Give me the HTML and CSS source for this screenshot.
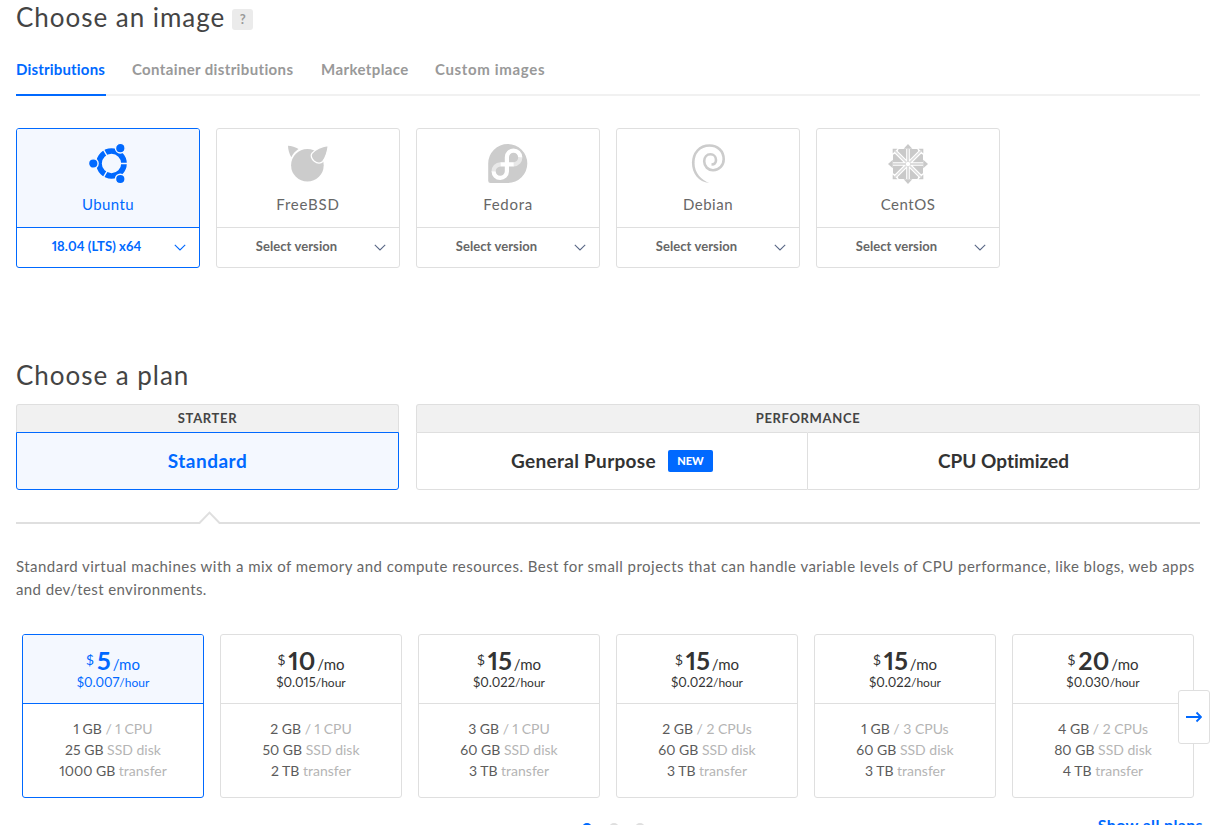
FILE: index.html
```html
<!DOCTYPE html>
<html lang="en">
<head>
<meta charset="utf-8">
<title>Create Droplet</title>
<link rel="stylesheet" href="styles.css">
</head>
<body>
<svg class="defs" width="0" height="0"><symbol id="chevron" viewBox="0 0 12 7"><path d="M.8.8 6 6 11.2.8" fill="none" stroke="currentColor" stroke-width="1.1"/></symbol></svg>
<main class="page">
  <h1 class="title">Choose an image <span class="help">?</span></h1>
  <nav class="tabs">
    <a class="tab tab-active t1">Distributions</a><a class="tab t2">Container distributions</a><a class="tab t3">Marketplace</a><a class="tab t4">Custom images</a>
  </nav>
  <section class="images">
    <article class="image selected">
      <div class="image-top">
        <svg class="logo" viewBox="0 0 40 40"><circle cx="23.5" cy="19.5" r="12.5" fill="none" stroke="#0069ff" stroke-width="5.6"/><g stroke="#f4f8ff" stroke-width="1.4"><path d="M23.5 19.5H40M23.5 19.5 15 4.8M23.5 19.5 15 34.2"/><g fill="#0069ff"><circle cx="5.3" cy="19.5" r="4.8"/><circle cx="32.3" cy="4.2" r="4.8"/><circle cx="32.3" cy="35" r="4.8"/></g></g></svg>
        <span class="name n1">Ubuntu</span>
      </div>
      <div class="version"><span class="v1">18.04 (LTS) x64</span><svg class="chev"><use href="#chevron"/></svg></div>
    </article>
    <article class="image">
      <div class="image-top">
        <svg class="logo" viewBox="0 0 40 40" fill="#ccc"><path d="M0 1.8C3.4 2 7.6 3 10.5 5 7.4 7 5 9.8 3.3 13.3 1.2 9.8 0 5.4 0 1.8Z"/><circle cx="19.4" cy="21.2" r="16.3"/><path d="M40.3 1.5C39.6 7.6 37.5 13.7 34.8 17.5 33 19.6 29.3 19.7 26.3 17.3 23.6 15 22.2 11.5 23.9 9.3 26.4 6 34.6 1.7 40.3 1.5Z" stroke="#fff" stroke-width="1.3"/></svg>
        <span class="name n2">FreeBSD</span>
      </div>
      <div class="version"><span>Select version</span><svg class="chev"><use href="#chevron"/></svg></div>
    </article>
    <article class="image">
      <div class="image-top">
        <svg class="logo" viewBox="0 0 40 40" fill="none" stroke-width="4.2"><path d="M19.8 0A19.5 19.5 0 0 1 19.8 39H2.5Q.2 39 .2 36.7V19.5A19.6 19.5 0 0 1 19.8 0Z" fill="#ccc"/><path d="M32.2 13A6.6 6.6 0 0 1 25.6 20.3M12.4 20.3A6.9 6.9 0 0 0 5.6 27.4" stroke="#e8e8e8"/><path d="M5.6 27.2A6.6 6.6 0 0 0 18.9 27.4V13.3A6.6 6.6 0 0 1 32.2 13.3M12.4 20.3H25.8" stroke="#fff"/></svg>
        <span class="name n3">Fedora</span>
      </div>
      <div class="version"><span>Select version</span><svg class="chev"><use href="#chevron"/></svg></div>
    </article>
    <article class="image">
      <div class="image-top">
        <svg class="logo" viewBox="0 0 40 40"><path d="M23.5 20.5C26 20.4 28 18.7 28 15.9 28 12.5 25.5 10.3 22.5 10.3 18.7 10.3 16.2 13.4 16.2 17.3 16.2 22.5 20.2 26.3 25.1 26.2 31.5 26 35.7 21.2 35.7 15.3 35.7 6.8 29.5 1.5 21.5 1.5 11.5 1.5 5.2 9 5.2 19" fill="none" stroke="#ccc" stroke-width="2.6"/><path d="M3.9 18.5C3.9 29.5 10.5 38 21.3 39 13.5 35.7 6.5 29.6 6.5 18.5Z" fill="#ccc"/></svg>
        <span class="name n4">Debian</span>
      </div>
      <div class="version"><span>Select version</span><svg class="chev"><use href="#chevron"/></svg></div>
    </article>
    <article class="image">
      <div class="image-top">
        <svg class="logo" viewBox="0 0 40 40"><defs><g id="wedge"><path d="M20 0 24.3 4.8H15.7Z"/><path d="M21.8 5H29.3L30.3 6.9 21.8 15.4ZM18.2 5H10.7L9.7 6.9 18.2 15.4Z"/><path d="M30.5 4.7H35.3V9.5Z"/><path d="M21.5 18.5 33.5 6.5" stroke="#dcdcdc" stroke-width="1.7"/><path d="M20 5V18" stroke="#dcdcdc" stroke-width="2"/></g></defs><g fill="#c9c9c9"><use href="#wedge"/><use href="#wedge" transform="rotate(90 20 20)"/><use href="#wedge" transform="rotate(180 20 20)"/><use href="#wedge" transform="rotate(270 20 20)"/></g></svg>
        <span class="name n5">CentOS</span>
      </div>
      <div class="version"><span>Select version</span><svg class="chev"><use href="#chevron"/></svg></div>
    </article>
  </section>

  <h2 class="title title-plan">Choose a plan</h2>
  <section class="groups">
    <div class="group starter">
      <div class="group-head">STARTER</div>
      <div class="options"><div class="option option-on">Standard</div></div>
    </div>
    <div class="group performance">
      <div class="group-head">PERFORMANCE</div>
      <div class="options"><div class="option"><span class="gp">General Purpose</span><span class="new">NEW</span></div><div class="option"><span class="cpu">CPU Optimized</span></div></div>
    </div>
  </section>
  <svg class="divider" viewBox="0 0 1184 14"><path d="M0 12H183.5L193.5 1.6 203.5 12H1184" fill="none" stroke="#dfdfdf" stroke-width="2"/></svg>
  <p class="blurb"><span class="b1">Standard virtual machines with a mix of memory and compute resources. Best for small projects that can handle variable levels of CPU performance, like blogs, web apps</span><br><span class="b2">and dev/test environments.</span></p>
  <section class="plans">
    <article class="plan selected"><div class="price"><div class="month"><sup>$</sup><b>5</b><span>/mo</span></div><div class="hour">$0.007<small>/hour</small></div></div><ul class="specs"><li>1 GB <i>/ 1 CPU</i></li><li>25 GB <i>SSD disk</i></li><li>1000 GB <i>transfer</i></li></ul></article>
    <article class="plan"><div class="price"><div class="month"><sup>$</sup><b>10</b><span>/mo</span></div><div class="hour">$0.015<small>/hour</small></div></div><ul class="specs"><li>2 GB <i>/ 1 CPU</i></li><li>50 GB <i>SSD disk</i></li><li>2 TB <i>transfer</i></li></ul></article>
    <article class="plan"><div class="price"><div class="month"><sup>$</sup><b>15</b><span>/mo</span></div><div class="hour">$0.022<small>/hour</small></div></div><ul class="specs"><li>3 GB <i>/ 1 CPU</i></li><li>60 GB <i>SSD disk</i></li><li>3 TB <i>transfer</i></li></ul></article>
    <article class="plan"><div class="price"><div class="month"><sup>$</sup><b>15</b><span>/mo</span></div><div class="hour">$0.022<small>/hour</small></div></div><ul class="specs"><li>2 GB <i>/ 2 CPUs</i></li><li>60 GB <i>SSD disk</i></li><li>3 TB <i>transfer</i></li></ul></article>
    <article class="plan"><div class="price"><div class="month"><sup>$</sup><b>15</b><span>/mo</span></div><div class="hour">$0.022<small>/hour</small></div></div><ul class="specs"><li>1 GB <i>/ 3 CPUs</i></li><li>60 GB <i>SSD disk</i></li><li>3 TB <i>transfer</i></li></ul></article>
    <article class="plan"><div class="price"><div class="month"><sup>$</sup><b>20</b><span>/mo</span></div><div class="hour">$0.030<small>/hour</small></div></div><ul class="specs"><li>4 GB <i>/ 2 CPUs</i></li><li>80 GB <i>SSD disk</i></li><li>4 TB <i>transfer</i></li></ul></article>
    <button class="next" aria-label="Next plans"><svg width="16" height="12" viewBox="0 0 16 12"><path d="M0 6H15M10.5 1.5 15 6 10.5 10.5" fill="none" stroke="#0069ff" stroke-width="1.8"/></svg></button>
  </section>
  <footer class="foot"><span></span><div class="dots"><i class="dot dot-on"></i><i class="dot"></i><i class="dot"></i></div><a class="all">Show all plans</a></footer>
</main>
</body>
</html>
```

FILE: styles.css
```css
* { box-sizing: border-box; }
html { overflow: hidden; }
body { margin: 0; height: 825px; overflow: hidden; background: #fff; color: #676767; font-family: Lato, "Open Sans", sans-serif; font-size: 15px; font-variant-ligatures: none; font-variant-numeric: proportional-nums; }
.defs { position: absolute; }
.page { width: 1216px; padding: 0 16px; }
.title { display: flex; align-items: center; gap: 7px; height: 36px; margin: 0; color: #444; font-size: 26px; font-weight: 400; line-height: 34px; letter-spacing: .97px; white-space: nowrap; padding-bottom: 2px; }
.help { width: 21px; height: 21px; margin-top: 4px; border-radius: 3px; background: #ebebeb; color: #999; font-size: 13px; font-weight: 700; line-height: 21px; text-align: center; letter-spacing: 0; }
.tabs { display: flex; gap: 26px; width: 1184px; height: 60px; border-bottom: 2px solid #f1f1f1; }
.tab { height: 60px; padding-top: 23px; color: #999; font-size: 15px; font-weight: 700; line-height: 20px; white-space: nowrap; letter-spacing: .4px; }
.tab-active { color: #0069ff; border-bottom: 2px solid #0069ff; }
.t1 { width: 90px; letter-spacing: .18px; }
.t2 { width: 163px; letter-spacing: .36px; }
.t3 { width: 88px; }
.t4 { letter-spacing: .66px; }
.images { display: flex; gap: 16px; margin-top: 32px; }
.image { width: 184px; height: 140px; border: 1px solid #dfdfdf; border-radius: 3px; overflow: hidden; }
.image-top { display: flex; flex-direction: column; align-items: center; height: 99px; padding-top: 15px; border-bottom: 1px solid #dfdfdf; }
.logo { width: 40px; height: 40px; overflow: visible; }
.name { margin-top: 10px; font-size: 15px; line-height: 20px; letter-spacing: .5px; }
.n1 { letter-spacing: .4px; }
.n2 { letter-spacing: .8px; }
.n3 { letter-spacing: .7px; }
.version { display: flex; align-items: center; height: 38px; padding: 0 13px 0 11px; font-size: 13px; font-weight: 700; }
.version span { flex: 1; text-align: center; padding: 0 9px 2px 0; letter-spacing: .08px; }
.chev { width: 12px; height: 7px; color: #5b6987; }
.image.selected, .plan.selected { border-color: #0069ff; color: #0069ff; }
.selected .image-top, .selected .price { border-color: #0069ff; background: #f4f8ff; color: #0069ff; }
.selected .chev { color: #0069ff; }
.title-plan { margin-top: 90px; }
.groups { display: flex; gap: 17px; width: 1184px; margin-top: 10px; }
.starter { width: 383px; }
.performance { width: 784px; }
.group-head { height: 28px; border: 1px solid #dfdfdf; border-bottom: 0; border-radius: 3px 3px 0 0; background: #f1f1f1; color: #444; font-size: 13px; font-weight: 700; line-height: 27px; letter-spacing: .65px; text-align: center; }
.options { display: flex; height: 58px; }
.option { display: flex; flex: 1; align-items: center; justify-content: center; gap: 12px; padding-bottom: 1px; border: 1px solid #dfdfdf; border-radius: 0 0 3px 3px; color: #333; font-size: 19px; font-weight: 700; }
.gp { letter-spacing: .3px; }
.performance .option:first-child { flex: 0 0 392px; border-radius: 0 0 0 3px; }
.option + .option { border-left: 0; border-radius: 0 0 3px 0; }
.option.option-on { border-color: #0069ff; background: #f4f8ff; color: #0069ff; letter-spacing: .5px; }
.new { width: 45px; height: 22px; margin-top: 1px; border-radius: 2px; background: #0069ff; color: #fff; font-size: 11px; font-weight: 900; line-height: 22px; text-align: center; }
.divider { display: block; width: 1184px; height: 14px; margin-top: 21px; }
.blurb { margin: 30px 0 0; font-size: 15px; line-height: 23px; white-space: nowrap; }
.b1 { letter-spacing: .465px; }
.b2 { letter-spacing: .4px; }
.plans { position: relative; display: flex; gap: 16px; margin-top: 33px; padding-left: 6px; }
.plan { width: 182px; height: 164px; flex: none; border: 1px solid #dfdfdf; border-radius: 3px; overflow: hidden; text-align: center; }
.price { height: 69px; padding-top: 11px; border-bottom: 1px solid #dfdfdf; color: #333; }
.month { display: flex; align-items: baseline; justify-content: center; height: 28px; line-height: 28px; }
.month sup { position: relative; top: -5px; margin-right: 3px; font-size: 14px; vertical-align: baseline; }
.month b { font-size: 25px; font-weight: 700; }
.month span { margin-left: 2px; font-size: 15px; }
.hour { font-size: 13px; line-height: 16px; }
.hour small { font-size: 12px; }
.specs { margin: 0; padding: 14px 0 0; list-style: none; color: #5b5b5b; font-size: 14px; line-height: 21px; }
.specs i { color: #b5b5b5; font-style: normal; }
.next { position: absolute; left: 1162px; top: 56px; display: flex; align-items: center; justify-content: center; width: 32px; height: 54px; padding: 0; border: 1px solid #dfdfdf; border-radius: 3px; background: #fff; }
.foot { display: grid; grid-template-columns: 1fr auto 1fr; width: 1195px; padding-top: 17px; }
.dots { display: flex; gap: 16.5px; padding-top: 8px; }
.dot { width: 10px; height: 10px; border-radius: 50%; background: #dfdfdf; }
.dot-on { background: #0069ff; }
.all { padding-right: 8px; color: #0069ff; font-size: 16px; font-weight: 700; line-height: 20px; letter-spacing: .35px; text-align: right; }
```
